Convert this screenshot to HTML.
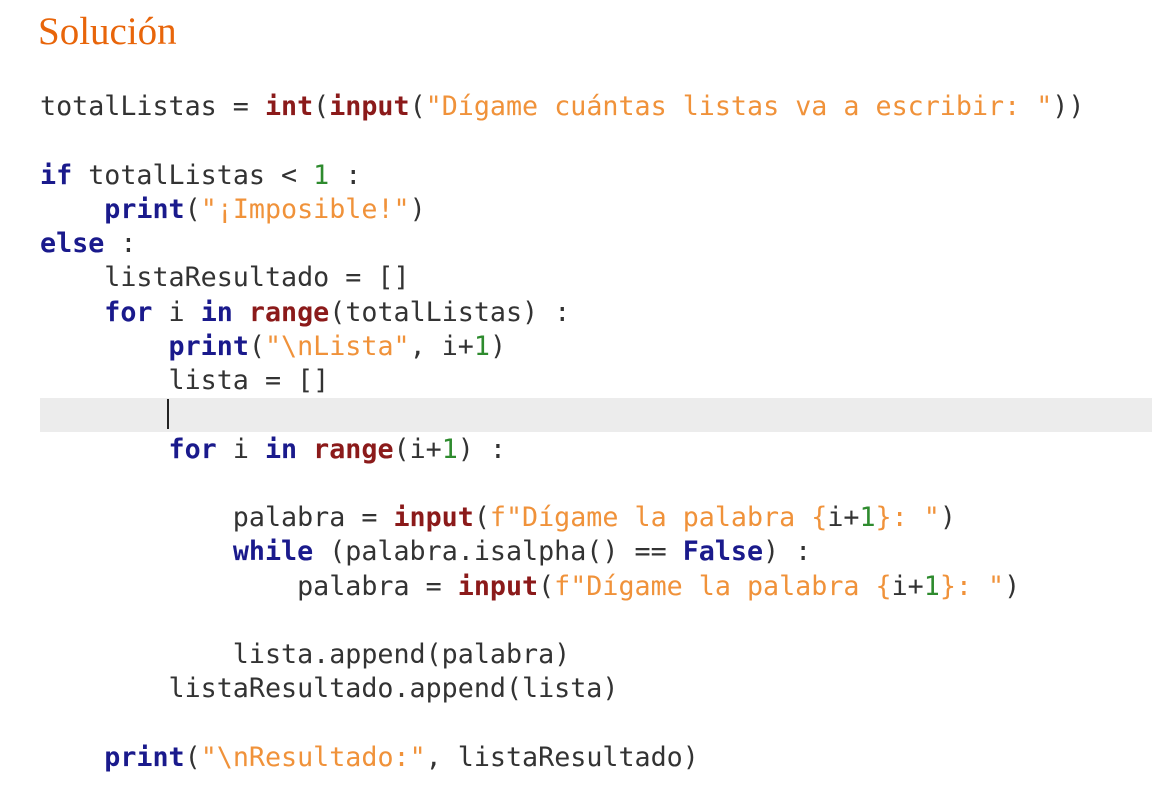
<!DOCTYPE html>
<html><head><meta charset="utf-8"><style>
body{margin:0;width:1152px;height:796px;background:#fff;position:relative;overflow:hidden}
.t{position:absolute;left:38px;top:9px;font-family:"Liberation Serif",serif;font-size:39px;color:#e8650a}
.code{position:absolute;left:40px;top:90px;font-family:"DejaVu Sans Mono",monospace;font-size:26.7px;line-height:34.25px;color:#333;white-space:pre}
.hl{position:absolute;left:40px;top:398px;width:1112px;height:34px;background:#ececec}
.cur{position:absolute;left:167px;top:399px;width:2px;height:30px;background:#222}
.k{color:#1a1a8c;font-weight:bold}
.b{color:#8b1a1a;font-weight:bold}
.s{color:#f0923a}
.n{color:#2e8b2e}
</style></head><body>
<div class="t">Solución</div>
<div class="hl"></div><div class="cur"></div>
<div class="code">totalListas = <span class="b">int</span>(<span class="b">input</span>(<span class="s">"Dígame cuántas listas va a escribir: "</span>))

<span class="k">if</span> totalListas &lt; <span class="n">1</span> :
    <span class="k">print</span>(<span class="s">"¡Imposible!"</span>)
<span class="k">else</span> :
    listaResultado = []
    <span class="k">for</span> i <span class="k">in</span> <span class="b">range</span>(totalListas) :
        <span class="k">print</span>(<span class="s">"\nLista"</span>, i+<span class="n">1</span>)
        lista = []

        <span class="k">for</span> i <span class="k">in</span> <span class="b">range</span>(i+<span class="n">1</span>) :

            palabra = <span class="b">input</span>(<span class="s">f"Dígame la palabra {</span>i+<span class="n">1</span><span class="s">}: "</span>)
            <span class="k">while</span> (palabra.isalpha() == <span class="k">False</span>) :
                palabra = <span class="b">input</span>(<span class="s">f"Dígame la palabra {</span>i+<span class="n">1</span><span class="s">}: "</span>)

            lista.append(palabra)
        listaResultado.append(lista)

    <span class="k">print</span>(<span class="s">"\nResultado:"</span>, listaResultado)</div>
</body></html>
